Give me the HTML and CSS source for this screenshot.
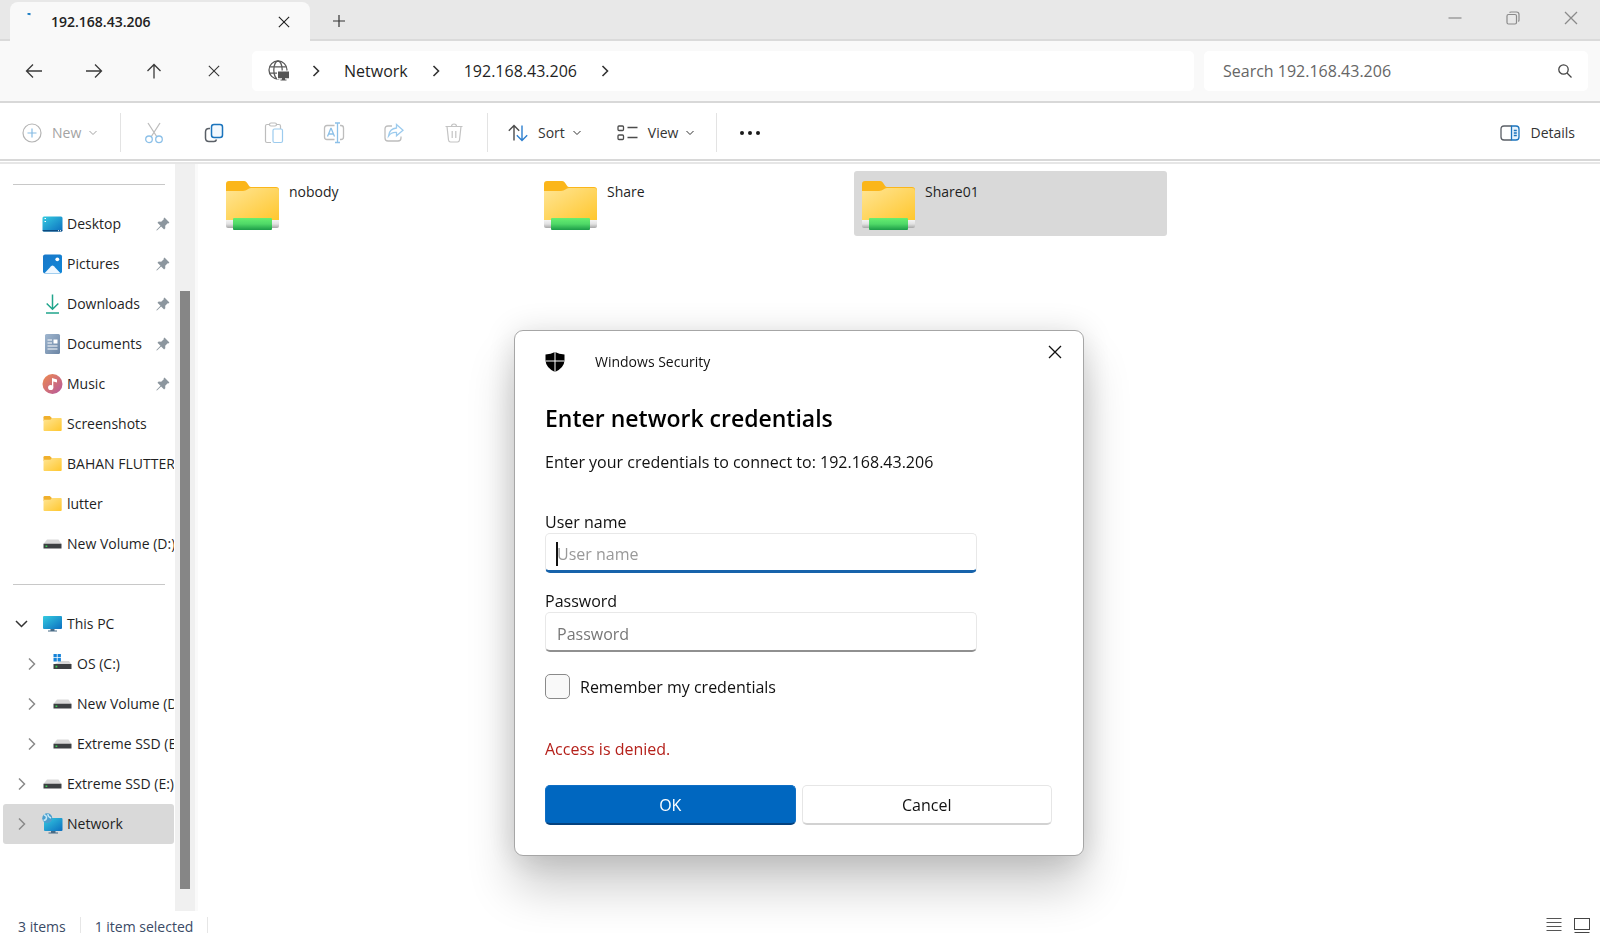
FILE: index.html
```
<!DOCTYPE html>
<html lang="en">
<head>
<meta charset="utf-8">
<title>192.168.43.206</title>
<link rel="stylesheet" href="styles.css">
</head>
<body>
<svg class="defs" aria-hidden="true">
  <defs>
    <linearGradient id="gFolder" x1="0" y1="0" x2="1" y2="1"><stop offset="0" stop-color="#ffe594"/><stop offset="1" stop-color="#ffc72e"/></linearGradient>
    <linearGradient id="gGreen" x1="0" y1="0" x2="0" y2="1"><stop offset="0" stop-color="#66ee70"/><stop offset=".5" stop-color="#4fd867"/><stop offset="1" stop-color="#1c9c48"/></linearGradient>
    <linearGradient id="gPipe" x1="0" y1="0" x2="0" y2="1"><stop offset="0" stop-color="#f4f4f4"/><stop offset=".5" stop-color="#e2e2e2"/><stop offset="1" stop-color="#a8a8a8"/></linearGradient>
    <linearGradient id="gDesk" x1="0" y1="0" x2="1" y2="1"><stop offset="0" stop-color="#35cbe0"/><stop offset="1" stop-color="#0c6fc0"/></linearGradient>
    <linearGradient id="gPic" x1="0" y1="0" x2="1" y2="1"><stop offset="0" stop-color="#1a78c8"/><stop offset="1" stop-color="#0f86d8"/></linearGradient>
    <linearGradient id="gDoc" x1="0" y1="0" x2="1" y2="1"><stop offset="0" stop-color="#9fb6cf"/><stop offset="1" stop-color="#6c85a4"/></linearGradient>
    <linearGradient id="gMus" x1="0" y1="0" x2="1" y2="1"><stop offset="0" stop-color="#ef8a4e"/><stop offset="1" stop-color="#b4579f"/></linearGradient>
    <symbol id="chev" viewBox="0 0 12 16"><path d="M3.500 3l5 5-5 5" fill="none" stroke="currentColor" stroke-width="1.6"/></symbol>
    <symbol id="down" viewBox="0 0 10 10"><path d="M1.500 3L5 6.500 8.500 3" fill="none" stroke="currentColor"/></symbol>
    <symbol id="x" viewBox="0 0 14 14"><path d="M1 1l12 12M13 1L1 13" fill="none" stroke="currentColor" stroke-width="1.300"/></symbol>
    <symbol id="pin" viewBox="0 0 14 14"><path d="M8.500.6l4.900 4.900-1 .9-.7-.2-2.500 2.600.1 2.400-1.200 1.200-3-3L1.200 13.300l-.9.3.3-.9 3.900-3.900-3-3L2.700 4.600l2.500.2 2.600-2.600-.2-.7z" fill="#8c969e"/></symbol>
    <symbol id="folder" viewBox="0 0 21 18"><path d="M1.500 4V2.300A1.300 1.300 0 0 1 2.800 1h5l2 2v3H1.500z" fill="#f0b02c"/><path d="M1.500 4.800h6.800l2-1.800h8.400a1 1 0 0 1 1 1v11a1 1 0 0 1-1 1H2.500a1 1 0 0 1-1-1z" fill="url(#gFolder)"/></symbol>
    <symbol id="drive" viewBox="0 0 21 18"><path d="M5 4.500h11.500l3 4.500H1.500z" fill="#d9d9d9"/><path d="M1.500 8.800h18v4.700h-18z" fill="#3c3f42"/><path d="M3.500 10.500h1.800v1.600H3.500z" fill="#39d353"/></symbol>
    <symbol id="share" viewBox="0 0 53 49"><path d="M0 12V3a3 3 0 0 1 3-3h15c4 0 4 6 7 6h25a3 3 0 0 1 3 3v5H0z" fill="#fbb61a"/><path d="M0 10h17c4 0 5-3 8-3h25a3 3 0 0 1 3 3v29H0z" fill="url(#gFolder)"/><path d="M0 39h53v6a2 2 0 0 1-2 2H2a2 2 0 0 1-2-2z" fill="url(#gPipe)"/><rect x="7" y="37" width="39" height="12" rx="1" fill="url(#gGreen)"/></symbol>
  </defs>
</svg>

<header class="titlebar">
  <div class="tab">
    <svg class="tab-busy" viewBox="0 0 20 20"><path d="M8.500 1h3v2.200l-3-.4z" fill="#1f7fc4"/></svg>
    <span class="tab-title">192.168.43.206</span>
    <button class="icon-btn" aria-label="Close tab"><svg width="12" height="12"><use href="#x"/></svg></button>
  </div>
  <button class="icon-btn new-tab" aria-label="New tab"><svg width="14" height="14" viewBox="0 0 14 14"><path d="M7 1v12M1 7h12" stroke="#333" stroke-width="1.200"/></svg></button>
  <div class="win-controls">
    <button class="icon-btn" aria-label="Minimize"><svg width="14" height="14" viewBox="0 0 14 14"><path d="M.5 7h13" stroke="currentColor" stroke-width="1.200"/></svg></button>
    <button class="icon-btn" aria-label="Restore"><svg width="14" height="14" viewBox="0 0 14 14" fill="none" stroke="currentColor" stroke-width="1.200"><rect x="1" y="3.500" width="9.500" height="9.500" rx="1.500"/><path d="M3.500 1.500q.5-.5 1.500-.5h5.500q2.500 0 2.500 2.500V9q0 1-.7 1.500"/></svg></button>
    <button class="icon-btn" aria-label="Close"><svg width="14" height="14"><use href="#x"/></svg></button>
  </div>
</header>

<nav class="navbar" aria-label="Navigation">
  <button class="icon-btn nav-btn" aria-label="Back"><svg width="18" height="16" viewBox="0 0 18 16"><path d="M17 8H1.500M8 1.500L1.500 8 8 14.500"/></svg></button>
  <button class="icon-btn nav-btn" aria-label="Forward"><svg width="18" height="16" viewBox="0 0 18 16"><path d="M1 8h15.500M10 1.500L16.500 8 10 14.500"/></svg></button>
  <button class="icon-btn nav-btn" aria-label="Up"><svg width="16" height="16" viewBox="0 0 16 16"><path d="M8 15.500V1.500M1.500 8L8 1.500 14.500 8"/></svg></button>
  <button class="icon-btn nav-btn" aria-label="Stop"><svg width="12" height="12"><use href="#x"/></svg></button>
  <div class="address">
    <svg class="globe" width="22" height="22" viewBox="0 0 22 22" fill="none" stroke="#5a5a5a" stroke-width="1.300"><circle cx="10" cy="10" r="9"/><ellipse cx="10" cy="10" rx="4.200" ry="9"/><path d="M1.800 6.800h16.400M1.800 13.200h16.400"/><path d="M9 10.500h12v9h-2.500v1.500h-7v-1.500H9z" fill="#fff" stroke="none"/><path d="M10 11.500h11v6.800h-4v1.200h1.500v1h-6v-1H14v-1.200h-4z" fill="#555" stroke="none"/></svg>
    <svg class="crumb-sep" width="12" height="16"><use href="#chev"/></svg>
    <a class="crumb" href="#">Network</a>
    <svg class="crumb-sep" width="12" height="16"><use href="#chev"/></svg>
    <a class="crumb" href="#">192.168.43.206</a>
    <svg class="crumb-sep" width="12" height="16"><use href="#chev"/></svg>
  </div>
  <label class="search">
    <input type="search" placeholder="Search 192.168.43.206" aria-label="Search 192.168.43.206">
    <svg width="14" height="14" viewBox="0 0 14 14" fill="none" stroke="#444" stroke-width="1.300"><circle cx="5.500" cy="5.500" r="4.700"/><path d="M9 9l4.500 4.500"/></svg>
  </label>
</nav>

<div class="toolbar" role="toolbar">
  <button class="tool new" disabled><svg width="20" height="20" viewBox="0 0 20 20" fill="none" stroke="#b4b4b4"><circle cx="10" cy="10" r="9" stroke-width="1.200"/><path d="M10 5.500v9M5.500 10h9" stroke="#85bbe4" stroke-width="1.200"/></svg><span>New</span><svg width="10" height="10"><use href="#down"/></svg></button>
  <span class="sep"></span>
  <button class="tool square" disabled aria-label="Cut"><svg width="20" height="22" viewBox="0 0 20 22" fill="none" stroke-width="1.300"><path d="M4 1l9 14M16 1L7 15" stroke="#bdbdbd"/><circle cx="5" cy="17.300" r="3.300" stroke="#8cc0e8"/><circle cx="15" cy="17.300" r="3.300" stroke="#8cc0e8"/></svg></button>
  <button class="tool square" aria-label="Copy"><svg width="20" height="20" viewBox="0 0 20 20" fill="none" stroke-width="1.500"><path d="M6 5.500H5Q1.500 5.500 1.500 9v6q0 3.500 3.500 3.500h5q2 0 2.500-2" stroke="#5a5f66"/><rect x="7.500" y="1.500" width="11" height="13" rx="2.500" stroke="#1b74bd" fill="#f3f9fe"/></svg></button>
  <button class="tool square" disabled aria-label="Paste"><svg width="20" height="22" viewBox="0 0 20 22" fill="none" stroke-width="1.200"><path d="M7 20.500H3q-1.500 0-1.500-1.500V4Q1.500 2.500 3 2.500h2.500M12.500 2.500H15q1.500 0 1.500 1.500v3" stroke="#bdbdbd"/><rect x="5.500" y="1" width="7" height="3" rx="1.500" stroke="#bdbdbd"/><rect x="9" y="7" width="9.500" height="13.500" rx="1.500" stroke="#9ccbee"/></svg></button>
  <button class="tool square" disabled aria-label="Rename"><svg width="22" height="22" viewBox="0 0 22 22" fill="none" stroke-width="1.300"><path d="M11.500 3.500H4Q1.500 3.500 1.500 6v9q0 2.500 2.500 2.500h7.500M17 3.500h1q2.500 0 2.500 2.500v9q0 2.500-2.500 2.500h-1" stroke="#bdbdbd"/><path d="M12 1h5M12 20.500h5M14.500 1v19.500M4.500 14.500l3.300-8h.4l3.300 8M5.700 12h4.600" stroke="#8cc0e8"/></svg></button>
  <button class="tool square" disabled aria-label="Share"><svg width="20" height="20" viewBox="0 0 20 20" fill="none" stroke-width="1.300"><path d="M8 3H4Q1 3 1 6v9q0 3 3 3h10q3 0 3-3v-1.500" stroke="#bdbdbd"/><path d="M12.500 1.500l6.500 5.700-6.500 5.600V9.500Q7.500 9 4.500 13 5.500 5.500 12.500 5z" stroke="#9ccbee"/></svg></button>
  <button class="tool square" disabled aria-label="Delete"><svg width="18" height="20" viewBox="0 0 18 20" fill="none" stroke="#c3c3c3" stroke-width="1.200"><path d="M.5 3.500h17M6.500 3.500Q6.500 1 9 1t2.500 2.500M2 3.500l1.500 13.500Q3.800 19 5.500 19h7q1.700 0 2-2L16 3.500M7.200 8v7M10.800 8v7"/></svg></button>
  <span class="sep"></span>
  <button class="tool"><svg width="20" height="18" viewBox="0 0 20 18" fill="none" stroke-width="1.400"><path d="M6 16.500V1.500M.8 6.700L6 1.500l5.200 5.200" stroke="#4c4c4c"/><path d="M14 1.500v15M8.800 11.300L14 16.500l5.200-5.200" stroke="#2d7fcf"/></svg><span>Sort</span><svg width="10" height="10"><use href="#down"/></svg></button>
  <button class="tool"><svg width="21" height="16" viewBox="0 0 21 16" fill="none" stroke="#4c4c4c" stroke-width="1.300"><rect x="1" y="1" width="5.500" height="4.500" rx="1"/><rect x="1" y="10" width="5.500" height="4.500" rx="1"/><path d="M10.500 2.500H20.500M10.500 12.500H20.500"/></svg><span>View</span><svg width="10" height="10"><use href="#down"/></svg></button>
  <span class="sep"></span>
  <button class="tool square" aria-label="More"><svg width="20" height="4" viewBox="0 0 20 4" fill="#1a1a1a"><circle cx="2" cy="2" r="2"/><circle cx="10" cy="2" r="2"/><circle cx="18" cy="2" r="2"/></svg></button>
  <button class="tool details"><svg width="20" height="16" viewBox="0 0 20 16" fill="none" stroke-width="1.300"><path d="M11.500 1H4Q1 1 1 4v8q0 3 3 3h7.500" stroke="#5a5f66"/><path d="M11.500 1H16q3 0 3 3v8q0 3-3 3h-4.500z" stroke="#1b74bd" fill="#e8f4fd"/><path d="M13.800 5.500h3M13.800 8h3M13.800 10.500h3" stroke="#1b74bd"/></svg><span>Details</span></button>
</div>

<main class="content">
  <aside class="sidebar">
    <nav class="tree" aria-label="Folders">
      <div class="rule"></div>
      <a class="node" href="#"><span class="twist"></span><svg class="ico" viewBox="0 0 21 18"><rect x=".5" y="1.500" width="20" height="15" rx="1.500" fill="url(#gDesk)"/><path d="M.5 15h20q0 1.500-1.500 1.500H2Q.5 16.500.5 15z" fill="#0b4a80"/><path d="M2.500 3.500H4M2.500 6.500H4M16 15.700h1M18 15.700h1" stroke="#fff"/></svg><span class="name">Desktop</span><svg class="pin"><use href="#pin"/></svg></a>
      <a class="node" href="#"><span class="twist"></span><svg class="ico" viewBox="0 0 21 18"><rect x="1" y="-.5" width="19" height="19" rx="2" fill="url(#gPic)"/><path d="M2.500 18.200l6.600-7q1.400-1.400 2.800 0l6.600 7z" fill="#eef7ff"/><circle cx="15.300" cy="4.300" r="1.900" fill="#fff"/></svg><span class="name">Pictures</span><svg class="pin"><use href="#pin"/></svg></a>
      <a class="node" href="#"><span class="twist"></span><svg class="ico" viewBox="0 0 21 18" fill="none" stroke="#21a58c" stroke-width="1.500"><path d="M10.500-.5v14.500M4.700 8.500l5.800 5.800 5.800-5.800M4 18h13"/></svg><span class="name">Downloads</span><svg class="pin"><use href="#pin"/></svg></a>
      <a class="node" href="#"><span class="twist"></span><svg class="ico" viewBox="0 0 21 18"><rect x="3" y="-1" width="15" height="20" rx="1.500" fill="url(#gDoc)"/><path d="M5.500 5h4.500M5.500 8h4.500M5.500 11h10M5.500 14h10" stroke="#fff"/><rect x="11.500" y="4.500" width="4" height="4" fill="#fff"/></svg><span class="name">Documents</span><svg class="pin"><use href="#pin"/></svg></a>
      <a class="node" href="#"><span class="twist"></span><svg class="ico" viewBox="0 0 21 18"><circle cx="10.500" cy="9" r="10" fill="url(#gMus)"/><circle cx="8.700" cy="12.500" r="2.600" fill="#fff"/><path d="M10 12.500V3l5 1.500v3L11.300 6.400v6.100z" fill="#fff"/></svg><span class="name">Music</span><svg class="pin"><use href="#pin"/></svg></a>
      <a class="node" href="#"><span class="twist"></span><svg class="ico"><use href="#folder"/></svg><span class="name">Screenshots</span></a>
      <a class="node" href="#"><span class="twist"></span><svg class="ico"><use href="#folder"/></svg><span class="name">BAHAN FLUTTER</span></a>
      <a class="node" href="#"><span class="twist"></span><svg class="ico"><use href="#folder"/></svg><span class="name">lutter</span></a>
      <a class="node" href="#"><span class="twist"></span><svg class="ico"><use href="#drive"/></svg><span class="name">New Volume (D:)</span></a>
      <div class="rule"></div>
      <a class="node open" href="#"><svg class="twist" viewBox="0 0 36 16"><path d="M13 5l5.500 5.500L24 5"/></svg><svg class="ico" viewBox="0 0 21 18"><rect x="1" y="1" width="19" height="13" rx="1" fill="url(#gDesk)"/><path d="M8.500 14h4v1.500H15v1H6v-1h2.500z" fill="#476a85"/></svg><span class="name">This PC</span></a>
      <a class="node child" href="#"><svg class="twist" viewBox="0 0 36 16"><path d="M16 2.500l5.500 5.500-5.500 5.500"/></svg><svg class="ico" viewBox="0 0 21 18"><path d="M9 6h8l2.500 3.500H1.500z" fill="#d9d9d9"/><path d="M1.500 9h18v5h-18z" fill="#3c3f42"/><path d="M3.500 10.800h1.800v1.600H3.500z" fill="#39d353"/><path d="M1.500-1h3.300v3.300H1.500zM5.600-1h3.300v3.300H5.600zM1.500 3.100h3.300v3.300H1.500zM5.600 3.100h3.300v3.300H5.600z" fill="#1683d8"/></svg><span class="name">OS (C:)</span></a>
      <a class="node child" href="#"><svg class="twist" viewBox="0 0 36 16"><path d="M16 2.500l5.500 5.500-5.500 5.500"/></svg><svg class="ico"><use href="#drive"/></svg><span class="name">New Volume (D:)</span></a>
      <a class="node child" href="#"><svg class="twist" viewBox="0 0 36 16"><path d="M16 2.500l5.500 5.500-5.500 5.500"/></svg><svg class="ico"><use href="#drive"/></svg><span class="name">Extreme SSD (E:)</span></a>
      <a class="node" href="#"><svg class="twist" viewBox="0 0 36 16"><path d="M16 2.500l5.500 5.500-5.500 5.500"/></svg><svg class="ico"><use href="#drive"/></svg><span class="name">Extreme SSD (E:)</span></a>
      <a class="node selected" href="#"><svg class="twist" viewBox="0 0 36 16"><path d="M16 2.500l5.500 5.500-5.500 5.500"/></svg><svg class="ico" viewBox="0 0 21 18"><rect x="2" y="3" width="18.500" height="13" rx="1" fill="url(#gDesk)"/><path d="M9 16h4.500v1.500H16v1H6.500v-1H9z" fill="#476a85"/><circle cx="5.300" cy="3.300" r="5" fill="#4a9fce"/><path d="M2-.3q3 1 2.500 3.300T1.500 5.500M6-1q-.5 2.500 3 4" fill="none" stroke="#c4e6f5" stroke-width="1.500"/></svg><span class="name">Network</span></a>
    </nav>
    <div class="scrollbar"><span class="track-before"></span><span class="thumb"></span><span class="track-after"></span></div>
  </aside>
  <section class="files" aria-label="Files">
    <a class="file" href="#"><svg><use href="#share"/></svg><span>nobody</span></a>
    <a class="file" href="#"><svg><use href="#share"/></svg><span>Share</span></a>
    <a class="file selected" href="#"><svg><use href="#share"/></svg><span>Share01</span></a>
  </section>
</main>

<footer class="status">
  <span>3 items</span><i></i><span>1 item selected</span><i></i>
  <div class="layouts">
    <button class="icon-btn" aria-label="List layout"><svg width="16" height="16" viewBox="0 0 16 16" stroke="#555"><path d="M.5 1.500h15M.5 5.500h15M.5 9.500h15M.5 13.500h15"/></svg></button>
    <button class="icon-btn" aria-label="Large icons"><svg width="16" height="16" viewBox="0 0 16 16" fill="none" stroke="#444"><rect x=".5" y="1.500" width="15" height="11"/><path d="M.5 15.500h15"/></svg></button>
  </div>
</footer>

<div class="overlay">
  <form class="dialog" role="dialog" aria-labelledby="dlg-title">
    <div class="dialog-bar">
      <svg width="20" height="20" viewBox="0 0 20 20"><path d="M10 0q4 2.300 9.500 2.500v6.300Q19 16 10 20 1 16 .5 8.800V2.500Q6 2.300 10 0z"/><path d="M10 0v20M.5 9h19" stroke="#fff"/></svg>
      <span>Windows Security</span>
      <button type="button" class="icon-btn" aria-label="Close"><svg width="14" height="14"><use href="#x"/></svg></button>
    </div>
    <h1 id="dlg-title">Enter network credentials</h1>
    <p class="lead">Enter your credentials to connect to: 192.168.43.206</p>
    <div class="field active">
      <label for="user">User name</label>
      <input id="user" type="text" placeholder="User name">
      <span class="caret"></span>
    </div>
    <div class="field">
      <label for="pass">Password</label>
      <input id="pass" type="password" placeholder="Password">
    </div>
    <label class="remember"><input type="checkbox"><span>Remember my credentials</span></label>
    <p class="error">Access is denied.</p>
    <div class="actions">
      <button type="button" class="btn primary">OK</button>
      <button type="button" class="btn">Cancel</button>
    </div>
  </form>
</div>
</body>
</html>
```

FILE: styles.css
```
* { box-sizing: border-box; }
body {
  margin: 0;
  height: 100vh;
  display: flex;
  flex-direction: column;
  overflow: hidden;
  background: #fff;
  color: #1f1f1f;
  font: 14px/20px "Open Sans", "Noto Sans", sans-serif;
}
a { color: inherit; text-decoration: none; }
button, input { font: inherit; color: inherit; }
svg { display: block; flex: none; overflow: visible; }
.defs { position: absolute; width: 0; height: 0; }
.icon-btn {
  display: flex;
  align-items: center;
  justify-content: center;
  padding: 0;
  border: 0;
  background: none;
}

.titlebar {
  display: flex;
  height: 41px;
  padding: 2px 0 0 10px;
  background: #e8e8e8;
  box-shadow: inset 0 -2px #dadada;
}
.tab {
  display: flex;
  align-items: center;
  width: 300px;
  padding: 0 20px 0 9px;
  border-radius: 8px 8px 0 0;
  background: #f9f9f9;
  color: #222;
}
.tab-busy { width: 20px; height: 20px; }
.tab-title { flex: 1; padding-left: 12px; font-weight: 600; }
.new-tab { width: 58px; height: 38px; }
.win-controls { display: flex; margin-left: auto; color: #8a8a8a; }
.win-controls .icon-btn { width: 58px; height: 32px; }

.navbar {
  display: flex;
  align-items: center;
  height: 62px;
  padding: 0 12px 0 4px;
  border-bottom: 2px solid #d8d8d8;
  background: #f9f9f9;
}
.nav-btn { width: 60px; height: 40px; color: #3a3a3a; }
.nav-btn svg { fill: none; stroke: #3a3a3a; stroke-width: 1.3; }
.address, .search {
  display: flex;
  align-items: center;
  height: 40px;
  border-radius: 5px;
  background: #fff;
  font-size: 16px;
}
.address { flex: 1; margin-left: 8px; padding-left: 16px; }
.crumb-sep { margin: 0 22px; color: #333; }
.globe + .crumb-sep { margin-left: 20px; }
.search { flex: 0 1 384px; margin-left: 10px; padding: 0 16px 0 19px; }
.search input { flex: 1; min-width: 0; padding: 0; border: 0; outline: 0; background: none; }
.search input::placeholder { color: #666; opacity: 1; }

.toolbar {
  display: flex;
  align-items: center;
  height: 58px;
  padding: 3px 9px 0 12px;
  border-bottom: 2px solid #d8d8d8;
}
.tool {
  display: flex;
  align-items: center;
  height: 40px;
  padding: 0 18px 0 17px;
  border: 0;
  background: none;
  color: #333;
}
.tool span { padding: 0 7px 0 10px; }
.tool.square { justify-content: center; width: 60px; padding: 0; }
.tool.new { width: 105px; padding: 0 10px; color: #a3a3a3; }
.tool.details { margin-left: auto; padding: 0 9px; }
.sep { width: 1px; height: 39px; margin: 0 3px; background: #e3e3e3; }

.content {
  display: flex;
  flex: 1;
  min-height: 0;
  margin-top: 1px;
  border-top: 2px solid #e6e6e6;
}
.sidebar { display: flex; border-right: 3px solid #fafafa; }
.tree { width: 175px; overflow: hidden; }
.rule { display: flex; align-items: center; height: 40px; padding: 0 10px 0 13px; }
.rule::before { content: ""; flex: 1; height: 1px; background: #c8c8c8; }
.node {
  display: flex;
  align-items: center;
  height: 40px;
  margin: 0 1px 0 3px;
  border-radius: 3px;
  white-space: nowrap;
  overflow: hidden;
}
.node.selected, .file.selected { background: #d9d9d9; }
.node.child .twist { margin-left: 10px; }
.twist { flex: none; width: 36px; height: 16px; margin-right: 3px; fill: none; stroke: #8a8a8a; stroke-width: 1.5; }
.open .twist { stroke: #333; }
.ico { width: 21px; height: 18px; }
.name { padding-left: 4px; }
.pin { width: 14px; height: 14px; margin-left: auto; margin-right: 4px; }
.scrollbar { display: flex; flex-direction: column; align-items: center; width: 20px; background: #f0f0f0; }
.track-before { flex: 127; }
.thumb { flex: 598; width: 10px; background: #868686; }
.track-after { flex: 22; }

.files {
  flex: 1;
  display: grid;
  grid-template-columns: repeat(auto-fill, 313px);
  grid-auto-rows: 65px;
  gap: 5px;
  padding: 7px 20px;
}
.file { display: flex; padding: 10px 8px; border-radius: 3px; line-height: 22px; }
.file svg { width: 53px; height: 49px; }
.file span { padding-left: 10px; }

.status {
  display: flex;
  flex: none;
  height: 22px;
  padding: 6px 10px 0 18px;
  overflow: hidden;
  color: #3a4a66;
}
.status i { width: 1px; height: 20px; margin: 0 14px; background: #e6e6e6; }
.layouts { display: flex; align-items: flex-start; gap: 12px; margin-left: auto; }

.overlay {
  position: fixed;
  inset: 0;
  display: flex;
  justify-content: center;
  align-items: flex-start;
  padding: 330px 2px 0 0;
}
.dialog {
  width: 570px;
  padding: 0 31px 30px 30px;
  border: 1px solid #a6a6a6;
  border-radius: 9px;
  background: #fff;
  color: #111;
  font-size: 16px;
  line-height: 22px;
  box-shadow: 0 32px 48px rgba(0, 0, 0, .2), 0 2px 32px rgba(0, 0, 0, .14);
}
.dialog-bar { display: flex; align-items: center; height: 62px; font-size: 14px; }
.dialog-bar span { padding-left: 30px; }
.dialog-bar .icon-btn { align-self: flex-start; width: 40px; height: 42px; margin: 0 -23px 0 auto; }
h1 { margin: 10px 0 18px; font-size: 23px; line-height: 30px; font-weight: 600; color: #000; }
.lead { margin: 0 0 38px; }
.field { position: relative; width: 432px; max-width: 100%; margin-bottom: 17px; }
.field label { display: block; }
.field input {
  display: block;
  width: 100%;
  height: 40px;
  padding: 4px 10px 0 11px;
  border: 1px solid #e8e8e8;
  border-bottom: 2px solid #909090;
  border-radius: 5px;
  outline: 0;
  background: #fff;
}
.field input::placeholder { color: #777; opacity: 1; }
.field.active input { border-bottom: 3px solid #1763ab; }
.field.active input::placeholder { color: #999; }
.caret { position: absolute; left: 11px; bottom: 7px; width: 2px; height: 24px; background: #111; }
.remember { display: flex; align-items: center; margin-top: 22px; }
.remember input {
  appearance: none;
  width: 25px;
  height: 25px;
  margin: 0 10px 0 0;
  border: 1px solid #8a8a8a;
  border-radius: 5px;
  background: #f9f9f9;
}
.error { margin: 39px 0 25px; color: #b5211b; }
.actions { display: grid; grid-template-columns: 1fr 1fr; gap: 6px; }
.btn { height: 40px; padding: 0; border: 1px solid #e6e6e6; border-bottom: 2px solid #d2d2d2; border-radius: 5px; background: #fff; }
.btn.primary { border-color: #0f6ec4; border-bottom: 2px solid #04427f; background: #0067c0; color: #fff; }
```
